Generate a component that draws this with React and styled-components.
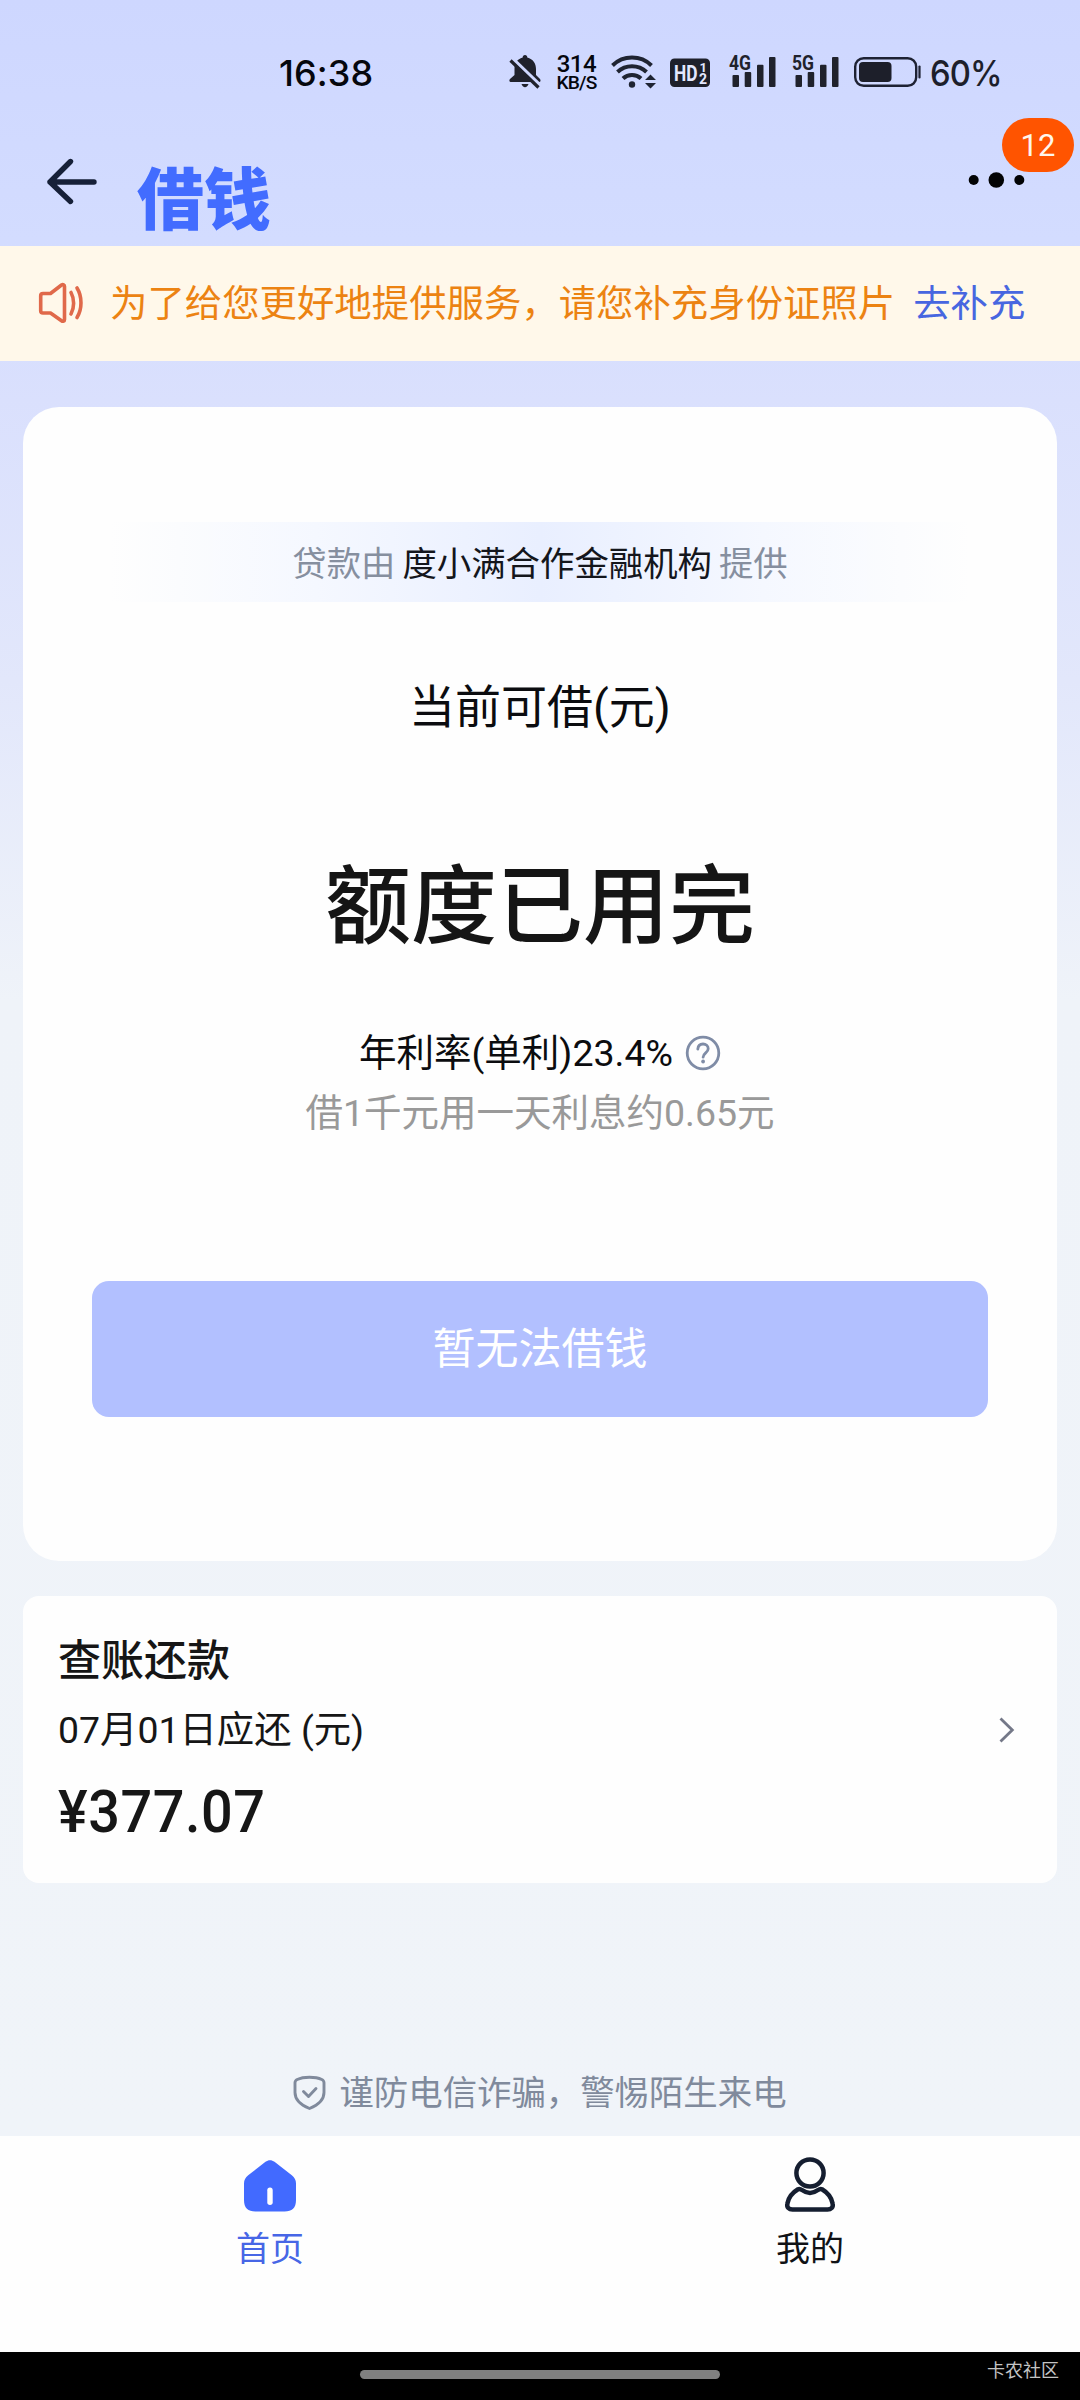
import React from "react";
import styled, { createGlobalStyle } from "styled-components";

const GlobalStyle = createGlobalStyle`
  * { box-sizing: border-box; }
  html, body { margin: 0; padding: 0; }
  body {
    width: 1080px;
    font-family: Roboto, "Noto Sans CJK SC", sans-serif;
    color: #0b0c0f;
  }
  svg { display: block; flex: none; overflow: visible; }
`;

const Screen = styled.div`
  width: 1080px;
  height: 2400px;
  display: flex;
  flex-direction: column;
  overflow: hidden;
  background: linear-gradient(180deg, #ced7ff 0, #d3dcff 240px, #dae0fd 400px, #e2e7fb 680px, #eff3f9 1000px, #f0f4f9 2136px);
`;

const StatusBar = styled.header`
  height: 108px;
  flex: none;
  display: flex;
  align-items: flex-start;
  padding: 53px 79px 0 279px;
  justify-content: space-between;
  color: #1d1f2b;
`;

const Clock = styled.time`
  font: 500 36px/40px Inter, sans-serif;
  letter-spacing: 0.1px;
  color: #05070d;
`;

const StatusIcons = styled.div`
  display: flex;
  align-items: flex-start;
`;

const NetSpeed = styled.div`
  width: 43px;
  margin: 1px 13px 0 14px;
  display: flex;
  flex-direction: column;
  align-items: center;
  color: #05070d;
  font-weight: 500;
  white-space: nowrap;
`;

const SpeedValue = styled.span`
  font-size: 24px;
  line-height: 20px;
  letter-spacing: -0.4px;
`;

const SpeedUnit = styled.span`
  font-size: 19.2px;
  line-height: 18px;
  letter-spacing: -0.8px;
`;

const Percent = styled.span`
  width: 71px;
  margin-left: 9px;
  font: 500 36px/40px Inter, sans-serif;
  letter-spacing: -1px;
  white-space: nowrap;
  transform: scaleX(0.91);
  transform-origin: left center;
`;

const TitleBar = styled.div`
  height: 138px;
  flex: none;
  display: flex;
  align-items: flex-start;
  padding: 0 54px 0 46px;
`;

const BackButton = styled.button`
  border: 0;
  padding: 0;
  margin-top: 48px;
  background: none;
`;

const PageTitle = styled.h1`
  margin: 53px 0 0 37px;
  font-size: 67px;
  line-height: 80px;
  font-weight: 900;
  color: #426cff;
`;

const MoreButton = styled.div`
  position: relative;
  margin: 62px 0 0 auto;
`;

const Badge = styled.span`
  position: absolute;
  left: 34px;
  top: -52px;
  width: 72px;
  height: 54px;
  border-radius: 27px;
  background: #ff5400;
  color: #fff6ec;
  font-size: 31px;
  line-height: 55px;
  text-align: center;
`;

const Notice = styled.div`
  height: 115px;
  flex: none;
  display: flex;
  align-items: center;
  padding: 0 0 1px 38px;
  background: #fff8ea;
  font-size: 37.4px;
  line-height: 50px;
  white-space: nowrap;
`;

const NoticeText = styled.span`
  margin: 2px 0 0 27px;
  color: #ec8312;
`;

const NoticeLink = styled.a`
  margin: 2px 0 0 18px;
  color: #4766e0;
`;

const Content = styled.main`
  flex: 1;
  display: flex;
  flex-direction: column;
  align-items: stretch;
  padding: 46px 23px 0;
`;

const LoanCard = styled.section`
  height: 1154px;
  border-radius: 36px;
  background: #fefefe;
  display: flex;
  flex-direction: column;
  align-items: center;
  padding: 115px 69px 0;
  white-space: nowrap;
`;

const Provider = styled.div`
  width: 860px;
  height: 80px;
  padding-top: 3px;
  display: flex;
  align-items: center;
  justify-content: center;
  gap: 7px;
  font-size: 34.4px;
  line-height: 50px;
  color: #868f9f;
  background: linear-gradient(90deg, rgba(232, 239, 255, 0) 0, #f5f8ff 24%, #e9efff 50%, #f5f8ff 76%, rgba(232, 239, 255, 0) 100%);
`;

const ProviderName = styled.span`
  color: #14161c;
`;

const Caption = styled.div`
  margin-top: 75px;
  font-size: 46px;
  line-height: 60px;
`;

const Headline = styled.div`
  margin-top: 111px;
  font-size: 86px;
  line-height: 120px;
  font-weight: 500;
  color: #151515;
`;

const RateRow = styled.div`
  margin-top: 58px;
  display: flex;
  align-items: center;
  gap: 12px;
  font-size: 37.5px;
  line-height: 54px;
`;

const RateHint = styled.div`
  margin-top: 6px;
  font-size: 37.5px;
  line-height: 54px;
  color: #999;
`;

const DisabledButton = styled.button`
  width: 896px;
  height: 136px;
  margin-top: 141px;
  flex: none;
  border: 0;
  border-radius: 17px;
  background: #b2c0ff;
  color: #fff;
  font-family: inherit;
  font-size: 43px;
  line-height: 60px;
  padding: 0;
`;

const BillCard = styled.section`
  height: 287px;
  margin-top: 35px;
  border-radius: 16px;
  background: #fefefe;
  display: flex;
  flex-direction: column;
  padding: 35px 42px 0 35px;
  color: #161616;
  white-space: nowrap;
`;

const BillTitle = styled.h2`
  margin: 0;
  font-size: 43px;
  line-height: 60px;
  font-weight: 500;
`;

const BillDate = styled.div`
  margin-top: 12px;
  display: flex;
  align-items: center;
  justify-content: space-between;
  font-size: 37.4px;
  line-height: 54px;
`;

const Amount = styled.div`
  margin-top: 20px;
  font-size: 60px;
  line-height: 70px;
  font-weight: 500;
  letter-spacing: 0.6px;
  transform: scaleX(0.93);
  transform-origin: left center;
`;

const SafetyTip = styled.footer`
  margin-top: auto;
  padding-bottom: 18px;
  display: flex;
  align-items: center;
  justify-content: center;
  gap: 13px;
  font-size: 34.4px;
  line-height: 50px;
  color: #808a9c;
  white-space: nowrap;
`;

const TabBar = styled.nav`
  height: 216px;
  flex: none;
  display: flex;
  background: #fefefe;
`;

const Tab = styled.div`
  flex: 1;
  display: flex;
  flex-direction: column;
  align-items: center;
  padding-top: 20px;
  gap: 10px;
  font-size: 34px;
  line-height: 50px;
  color: ${(p) => (p.$active ? "#4766e6" : "#101216")};
`;

const GestureBar = styled.div`
  height: 48px;
  flex: none;
  display: grid;
  grid-template-columns: 360px 360px 360px;
  background: #000;
`;

const Handle = styled.div`
  grid-column: 2;
  height: 9px;
  margin-top: 18px;
  border-radius: 4.5px;
  background: #808080;
`;

const Watermark = styled.span`
  justify-self: end;
  margin: 7px 21px 0 0;
  font-size: 18px;
  line-height: 24px;
  color: #c4c4c4;
`;

const MutedBell = () => (
  <svg width="32" height="36" viewBox="0 0 32 36">
    <path fill="#20222c" d="M16 2c1.500 0 2.300 1 2.300 2.500C24 6 27 10.500 27 16v6l4 4c.6.600 1 3-.5 3H1.500C0 29 .2 26.500 1 26l4.500-4v-6C5.500 10.500 8 6 13.700 4.500 13.700 3 14.500 2 16 2zM12.500 31h7c-.5 2-2 3.200-3.500 3.200S13 33 12.500 31z" />
    <path d="M4 6l28 27" stroke="#cfd8ff" strokeWidth="3.500" />
    <path d="M1.500 7.500l28 27" stroke="#20222c" strokeWidth="3.200" />
  </svg>
);

const Wifi = () => (
  <svg width="46" height="36" viewBox="0 0 46 36">
    <g fill="none" stroke="#1f2432" strokeWidth="4">
      <path d="M1.500 12.500a28 28 0 0 1 39 0" />
      <path d="M6.500 19a21 21 0 0 1 29 0" />
      <path d="M12 25.500a13 13 0 0 1 18 0" />
    </g>
    <circle cx="21" cy="31.500" r="3.200" fill="#1f2432" />
    <path d="M34 27l5.500-5.500L45 27zM34 30h11l-5.500 5.500z" fill="#1f2432" />
  </svg>
);

const HdBadge = () => (
  <svg width="40" height="36" viewBox="0 0 40 36" style={{ marginLeft: 13 }}>
    <rect y="5.500" width="40" height="28.500" rx="4.500" fill="#1e202b" />
    <g fill="#e3e8ff" fontFamily="Roboto" fontWeight="700">
      <text x="4" y="27.500" fontSize="22.500" textLength="23.500" lengthAdjust="spacingAndGlyphs">HD</text>
      <text x="29.500" y="19" fontSize="13">1</text>
      <text x="29" y="31" fontSize="14">2</text>
    </g>
  </svg>
);

const Signal = ({ label, gap }) => (
  <svg width="47" height="36" viewBox="0 0 47 36" style={{ marginLeft: gap }}>
    <text x="0" y="17" fontFamily="Roboto" fontWeight="700" fontSize="20" fill="#20222c" textLength="22" lengthAdjust="spacingAndGlyphs">{label}</text>
    <g fill="#20222c">
      <rect x="3.500" y="22" width="6.500" height="12" rx="1" />
      <rect x="15.700" y="19" width="6.500" height="15" rx="1" />
      <rect x="28" y="11.700" width="6.500" height="22.300" rx="1" />
      <rect x="40" y="4" width="6.500" height="30" rx="1" />
    </g>
  </svg>
);

const Battery = () => (
  <svg width="67" height="36" viewBox="0 0 67 36" style={{ marginLeft: 15 }}>
    <rect x="1.200" y="5.200" width="61" height="27.600" rx="8.500" fill="none" stroke="#1e2233" strokeWidth="2.400" />
    <rect x="5" y="9" width="32.500" height="20" rx="4" fill="#1d1f2a" />
    <path d="M65.500 13.500v11" stroke="#1e2233" strokeWidth="2.200" strokeLinecap="round" />
  </svg>
);

const BackArrow = () => (
  <svg width="54" height="52" viewBox="0 0 54 52" fill="none" stroke="#162038" strokeWidth="5.400" strokeLinecap="round" strokeLinejoin="round">
    <path d="M48 26H4M24.500 5.500L4 26l20.500 19.500" />
  </svg>
);

const MoreDots = () => (
  <svg width="58" height="20" viewBox="0 0 58 20" fill="#020305">
    <circle cx="5.700" cy="10" r="5" />
    <circle cx="28.300" cy="10" r="7.800" />
    <circle cx="51.300" cy="10" r="5" />
  </svg>
);

const Speaker = () => (
  <svg width="45" height="42" viewBox="0 0 45 42" fill="none" stroke="#e0694a" strokeWidth="3.600" strokeLinecap="round" strokeLinejoin="round">
    <path d="M5 11.500h7.500L23.500 3c1.500-.9 3 0 3 1.500v33c0 1.700-1.600 2.300-3 1.300L12.500 31H5c-1.500 0-2.300-.8-2.300-2.300V13.800c0-1.500.8-2.300 2.300-2.300z" />
    <path d="M33 10.500c3.500 6.500 3.500 15 0 21.500M39 6c5.300 8.500 5.300 21 0 29.500" />
  </svg>
);

const Help = () => (
  <svg width="36" height="36" viewBox="0 0 36 36" fill="none" stroke="#7f8ca6" strokeWidth="2.800">
    <circle cx="18" cy="18" r="15.800" />
    <path d="M12.800 14.200c.2-3.500 2.300-5.200 5.200-5.200s5.200 1.800 5.200 4.700c0 4-5.100 4.300-5.100 8.500" strokeLinecap="round" />
    <circle cx="18.100" cy="26.500" r="1.900" fill="#7f8ca6" stroke="none" />
  </svg>
);

const Chevron = () => (
  <svg width="16" height="28" viewBox="0 0 16 28" fill="none" stroke="#747888" strokeWidth="2.800">
    <path d="M1.500 2.500L13.300 14 1.500 25.500" />
  </svg>
);

const Shield = () => (
  <svg width="33" height="36" viewBox="0 0 33 36" fill="none" stroke="#808a9c" strokeWidth="2.900" strokeLinecap="round" strokeLinejoin="round">
    <path d="M16.500 2.200c5 0 9.200.8 12.300 2.300 1.400.700 2.200 1.700 2.200 3.300v9.700c0 7-5.800 12.500-14.500 16C7.800 30 2 24.500 2 17.500V7.800c0-1.600.8-2.600 2.200-3.300C7.300 3 11.500 2.200 16.500 2.200z" />
    <path d="M10.500 16.500l5 5 7.500-8" />
  </svg>
);

const HomeIcon = () => (
  <svg width="56" height="58" viewBox="0 0 56 58">
    <path fill="#426aff" d="M23.500 5.800c2.700-2.200 6.300-2.200 9 0l17.300 13.400c2.800 2.200 4.200 4.800 4.200 8.300V44c0 8-4 11.500-11.500 11.500h-29C6 55.500 2 52 2 44V27.500c0-3.500 1.400-6.100 4.200-8.300z" />
    <rect x="25.300" y="31.500" width="5.400" height="17.500" rx="2.700" fill="#fff" />
  </svg>
);

const UserIcon = () => (
  <svg width="54" height="58" viewBox="0 0 54 58" fill="none" stroke="#151e30" strokeWidth="4.500" strokeLinejoin="round">
    <circle cx="27" cy="17" r="13.600" />
    <path d="M15 33.200c-5 3-9.500 7.800-10.600 14.300C3.500 51.500 6 53.500 9.500 53.500h35c3.500 0 6-2 5.100-6C48.500 41 44 36.200 39 33.200c-1.500-.7-2.600-.2-4 .8-5 3.700-11 3.700-16 0-1.400-1-2.500-1.500-4-.8z" />
  </svg>
);

export default function App() {
  return (
    <Screen lang="zh-CN">
      <GlobalStyle />
      <StatusBar>
        <Clock>16:38</Clock>
        <StatusIcons>
          <MutedBell />
          <NetSpeed>
            <SpeedValue>314</SpeedValue>
            <SpeedUnit>KB/S</SpeedUnit>
          </NetSpeed>
          <Wifi />
          <HdBadge />
          <Signal label="4G" gap={19} />
          <Signal label="5G" gap={16} />
          <Battery />
          <Percent>60%</Percent>
        </StatusIcons>
      </StatusBar>
      <TitleBar>
        <BackButton aria-label="返回"><BackArrow /></BackButton>
        <PageTitle>借钱</PageTitle>
        <MoreButton>
          <MoreDots />
          <Badge>12</Badge>
        </MoreButton>
      </TitleBar>
      <Notice>
        <Speaker />
        <NoticeText>为了给您更好地提供服务，请您补充身份证照片</NoticeText>
        <NoticeLink>去补充</NoticeLink>
      </Notice>
      <Content>
        <LoanCard>
          <Provider>
            <span>贷款由</span>
            <ProviderName>度小满合作金融机构</ProviderName>
            <span>提供</span>
          </Provider>
          <Caption>当前可借(元)</Caption>
          <Headline>额度已用完</Headline>
          <RateRow>
            <span>年利率(单利)23.4%</span>
            <Help />
          </RateRow>
          <RateHint>借1千元用一天利息约0.65元</RateHint>
          <DisabledButton disabled>暂无法借钱</DisabledButton>
        </LoanCard>
        <BillCard>
          <BillTitle>查账还款</BillTitle>
          <BillDate>
            <span>07月01日应还 (元)</span>
            <Chevron />
          </BillDate>
          <Amount>¥377.07</Amount>
        </BillCard>
        <SafetyTip>
          <Shield />
          <span>谨防电信诈骗，警惕陌生来电</span>
        </SafetyTip>
      </Content>
      <TabBar>
        <Tab $active>
          <HomeIcon />
          <span>首页</span>
        </Tab>
        <Tab>
          <UserIcon />
          <span>我的</span>
        </Tab>
      </TabBar>
      <GestureBar>
        <Handle />
        <Watermark>卡农社区</Watermark>
      </GestureBar>
    </Screen>
  );
}
